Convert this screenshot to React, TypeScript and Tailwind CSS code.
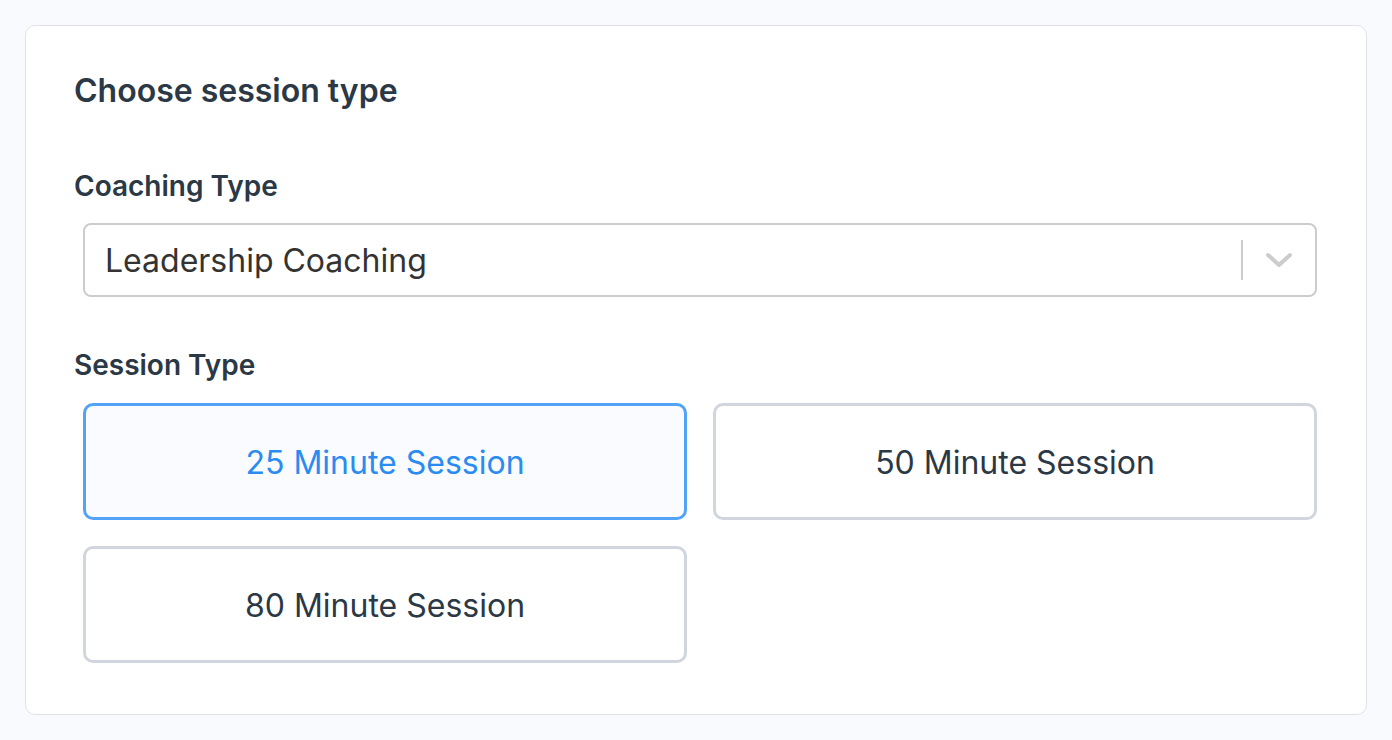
import React from "react";

export default function App() {
  const font = { fontFamily: "Inter, 'Noto Sans', sans-serif" };
  return (
    <div className="min-h-screen w-full bg-[#f9fafd] p-[25px]" style={font}>
      <div className="rounded-[10px] border border-[#e1e2e5] bg-white pl-[48px] pr-[49px] pt-[45px] pb-[51px]">
        <h2 className="text-[32px] font-semibold leading-[40px] text-[#2b3845]">Choose session type</h2>
        <div className="mt-[58px] text-[28px] font-semibold leading-[34px] text-[#2b3845]">Coaching Type</div>
        <div className="ml-[9px] mt-[20px] flex h-[74px] items-center rounded-[8px] border-2 border-[#cccccc] bg-white">
          <div className="flex-1 pl-[20px] pt-[2px] text-[32px] leading-[38px] text-[#333333]">Leadership Coaching</div>
          <div className="h-[40px] w-[2px] bg-[#cccccc]" />
          <div className="flex w-[72px] items-center justify-center">
            <svg width="26" height="16" viewBox="0 0 26 16" fill="none">
              <path d="M2 3 L13 13 L24 3" stroke="#cccccc" strokeWidth="4" strokeLinecap="round" strokeLinejoin="round" />
            </svg>
          </div>
        </div>
        <div className="mt-[51px] text-[28px] font-semibold leading-[34px] text-[#2b3845]">Session Type</div>
        <div className="ml-[9px] mt-[21px] grid grid-cols-2 gap-[26px]">
          <button className="flex h-[117px] items-center justify-center rounded-[10px] border-[3px] border-[#52a3f7] bg-[#f9fbfe] pt-[2px] text-[32px] text-[#2a8bf0]">25 Minute Session</button>
          <button className="flex h-[117px] items-center justify-center rounded-[10px] border-[3px] border-[#d1d6de] bg-white pt-[2px] text-[32px] text-[#2b3845]">50 Minute Session</button>
          <button className="flex h-[117px] items-center justify-center rounded-[10px] border-[3px] border-[#d1d6de] bg-white pt-[2px] text-[32px] text-[#2b3845]">80 Minute Session</button>
        </div>
      </div>
    </div>
  );
}
